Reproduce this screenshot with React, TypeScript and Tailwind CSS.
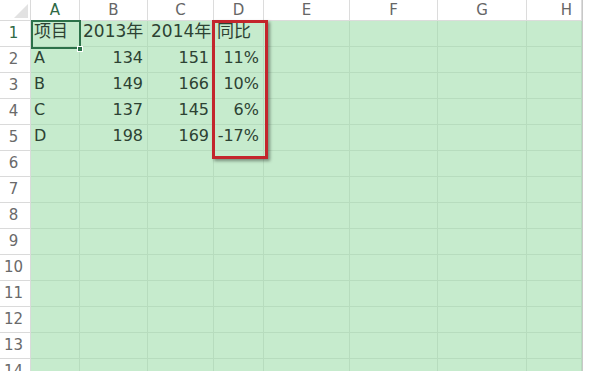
import React from 'react'

const COLS = ['A', 'B', 'C', 'D', 'E', 'F', 'G', 'H']

type Cell = { v: string; align: 'left' | 'right' }

const DATA: Cell[][] = [
  [
    { v: '项目', align: 'left' },
    { v: '2013年', align: 'left' },
    { v: '2014年', align: 'left' },
    { v: '同比', align: 'left' },
  ],
  [
    { v: 'A', align: 'left' },
    { v: '134', align: 'right' },
    { v: '151', align: 'right' },
    { v: '11%', align: 'right' },
  ],
  [
    { v: 'B', align: 'left' },
    { v: '149', align: 'right' },
    { v: '166', align: 'right' },
    { v: '10%', align: 'right' },
  ],
  [
    { v: 'C', align: 'left' },
    { v: '137', align: 'right' },
    { v: '145', align: 'right' },
    { v: '6%', align: 'right' },
  ],
  [
    { v: 'D', align: 'left' },
    { v: '198', align: 'right' },
    { v: '169', align: 'right' },
    { v: '-17%', align: 'right' },
  ],
]

const ROWS = Array.from({ length: 14 }, (_, i) => i + 1)

export default function App() {
  return (
    <div className="relative h-[371px] w-[589px] overflow-hidden bg-white font-['DejaVu_Sans','Noto_Sans_CJK_SC',sans-serif] text-[16px] text-[#2d4233]">
      <div className="grid grid-cols-[31px_49px_68px_66px_50px_86px_88px_89px_55px_1fr] grid-rows-[21px_repeat(14,26px)]">
        {/* corner */}
        <div className="flex items-end justify-end border-b border-r border-[#dadada] bg-white p-[2px]">
          <svg width="14" height="14" viewBox="0 0 14 14">
            <polygon points="14,0 14,14 0,14" fill="#e2e2e2" />
          </svg>
        </div>
        {COLS.map((c) => (
          <div
            key={c}
            className={`flex items-center border-b border-r border-[#dcdcdc] bg-white text-[15px] ${
              c === 'A' ? 'text-[#2f6a45]' : 'text-[#666666]'
            } ${c === 'H' ? 'justify-end pr-[9px]' : 'justify-center'}`}
          >
            {c}
          </div>
        ))}
        <div className="border-l border-[#c8c8c8] bg-white" />

        {ROWS.map((r) => (
          <React.Fragment key={r}>
            <div
              className={`flex items-end justify-center border-r border-b border-[#dadada] bg-white pb-[2px] pr-[3px] text-[15px] ${
                r === 1 ? 'text-[#2f6a45]' : 'text-[#6a6a6a]'
              }`}
            >
              {r}
            </div>
            {COLS.map((c, ci) => {
              const cell = DATA[r - 1]?.[ci]
              const cjk = cell && /[\u4e00-\u9fff]/.test(cell.v)
              return (
                <div
                  key={c}
                  className={`flex items-end whitespace-nowrap border-b border-r border-[#b7dcbe] bg-[#c6ebcd] pb-[2px] ${
                    cell?.align === 'right' ? 'justify-end pr-[4px]' : 'justify-start pl-[3px]'
                  } ${ci === 1 || ci === 2 ? 'pl-[1px]' : ''} ${cjk ? 'text-[17px]' : ''}`}
                >
                  {cell?.v}
                </div>
              )
            })}
            <div className="border-l border-[#c8c8c8] bg-white" />
          </React.Fragment>
        ))}
      </div>

      {/* active cell A1 */}
      <div className="pointer-events-none absolute left-[31px] top-[20px] h-[29px] w-[50px] border-2 border-[#2c7149]" />
      <div className="pointer-events-none absolute left-[77px] top-[46px] h-[6px] w-[6px] border border-white bg-[#2c7149]" />

      {/* highlight box around column D */}
      <div className="pointer-events-none absolute left-[212px] top-[20px] h-[139px] w-[56px] border-[3px] border-[#c3252c] shadow-[2px_2px_3px_rgba(0,0,0,0.4)]" />
    </div>
  )
}
